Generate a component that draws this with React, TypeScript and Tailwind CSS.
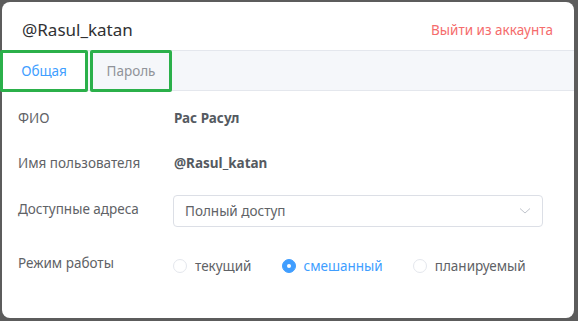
import React from "react";

function Radio({ label, checked }: { label: string; checked?: boolean }) {
  return (
    <div className="flex items-center gap-[8px]">
      {checked ? (
        <span className="w-[14px] h-[14px] rounded-full bg-[#409eff] border border-[#409eff] flex items-center justify-center">
          <span className="w-[4px] h-[4px] rounded-full bg-white" />
        </span>
      ) : (
        <span className="w-[14px] h-[14px] rounded-full bg-white border border-[#e4e7ed]" />
      )}
      <span className={checked ? "text-[#409eff]" : "text-[#606266]"}>{label}</span>
    </div>
  );
}

export default function App() {
  return (
    <div
      className="w-[578px] h-[321px] bg-[#5c5c5c] pt-[2px] pl-[2px] pr-[4px] pb-[3px]"
      style={{ fontFamily: '"Noto Sans", sans-serif' }}
    >
      <div className="w-full h-full bg-white rounded-[8px] flex flex-col text-[13.5px] text-[#606266]">
        <div className="h-[49px] flex items-center justify-between pl-[20px] pr-[21px] pt-[8px] border-b border-[#e4e7ed]">
          <span className="text-[17px] text-[#303133]">@Rasul_katan</span>
          <span className="text-[13.5px] text-[#f56c6c]">Выйти из аккаунта</span>
        </div>
        <div className="h-[40px] bg-[#f5f7fa] border-b border-[#e4e7ed] flex gap-[2px]">
          <div className="-ml-[2px] -mt-[1px] h-[42px] w-[88px] border-[3px] border-[#2bb04a] rounded-[2px] bg-white flex items-center justify-center text-[#409eff]">
            Общая
          </div>
          <div className="-mt-[1px] h-[42px] w-[82px] border-[3px] border-[#2bb04a] rounded-[2px] flex items-center justify-center text-[#909399]">
            Пароль
          </div>
        </div>
        <div className="flex flex-col pl-[16px] pt-[17px]">
          <div className="flex h-[20px] items-center">
            <span className="w-[156px]">ФИО</span>
            <span className="font-bold text-[#555a61]">Рас Расул</span>
          </div>
          <div className="flex h-[20px] items-center mt-[25px]">
            <span className="w-[156px]">Имя пользователя</span>
            <span className="font-bold text-[#555a61]">@Rasul_katan</span>
          </div>
          <div className="flex items-start mt-[22px]">
            <span className="w-[155px] h-[20px] mt-[4px] flex items-center">Доступные адреса</span>
            <div className="w-[370px] h-[32px] border border-[#dcdfe6] rounded-[4px] flex items-center justify-between pl-[11px] pr-[11px]">
              <span>Полный доступ</span>
              <svg width="12" height="8" viewBox="0 0 12 8" fill="none">
                <path d="M1 1.5 L6 6 L11 1.5" stroke="#c0c4cc" strokeWidth="1" />
              </svg>
            </div>
          </div>
          <div className="flex items-start mt-[26px]">
            <span className="w-[155px] h-[20px] flex items-center">Режим работы</span>
            <div className="flex items-center gap-[30px] h-[20px] mt-[3px]">
              <Radio label="текущий" />
              <Radio label="смешанный" checked />
              <Radio label="планируемый" />
            </div>
          </div>
        </div>
      </div>
    </div>
  );
}
